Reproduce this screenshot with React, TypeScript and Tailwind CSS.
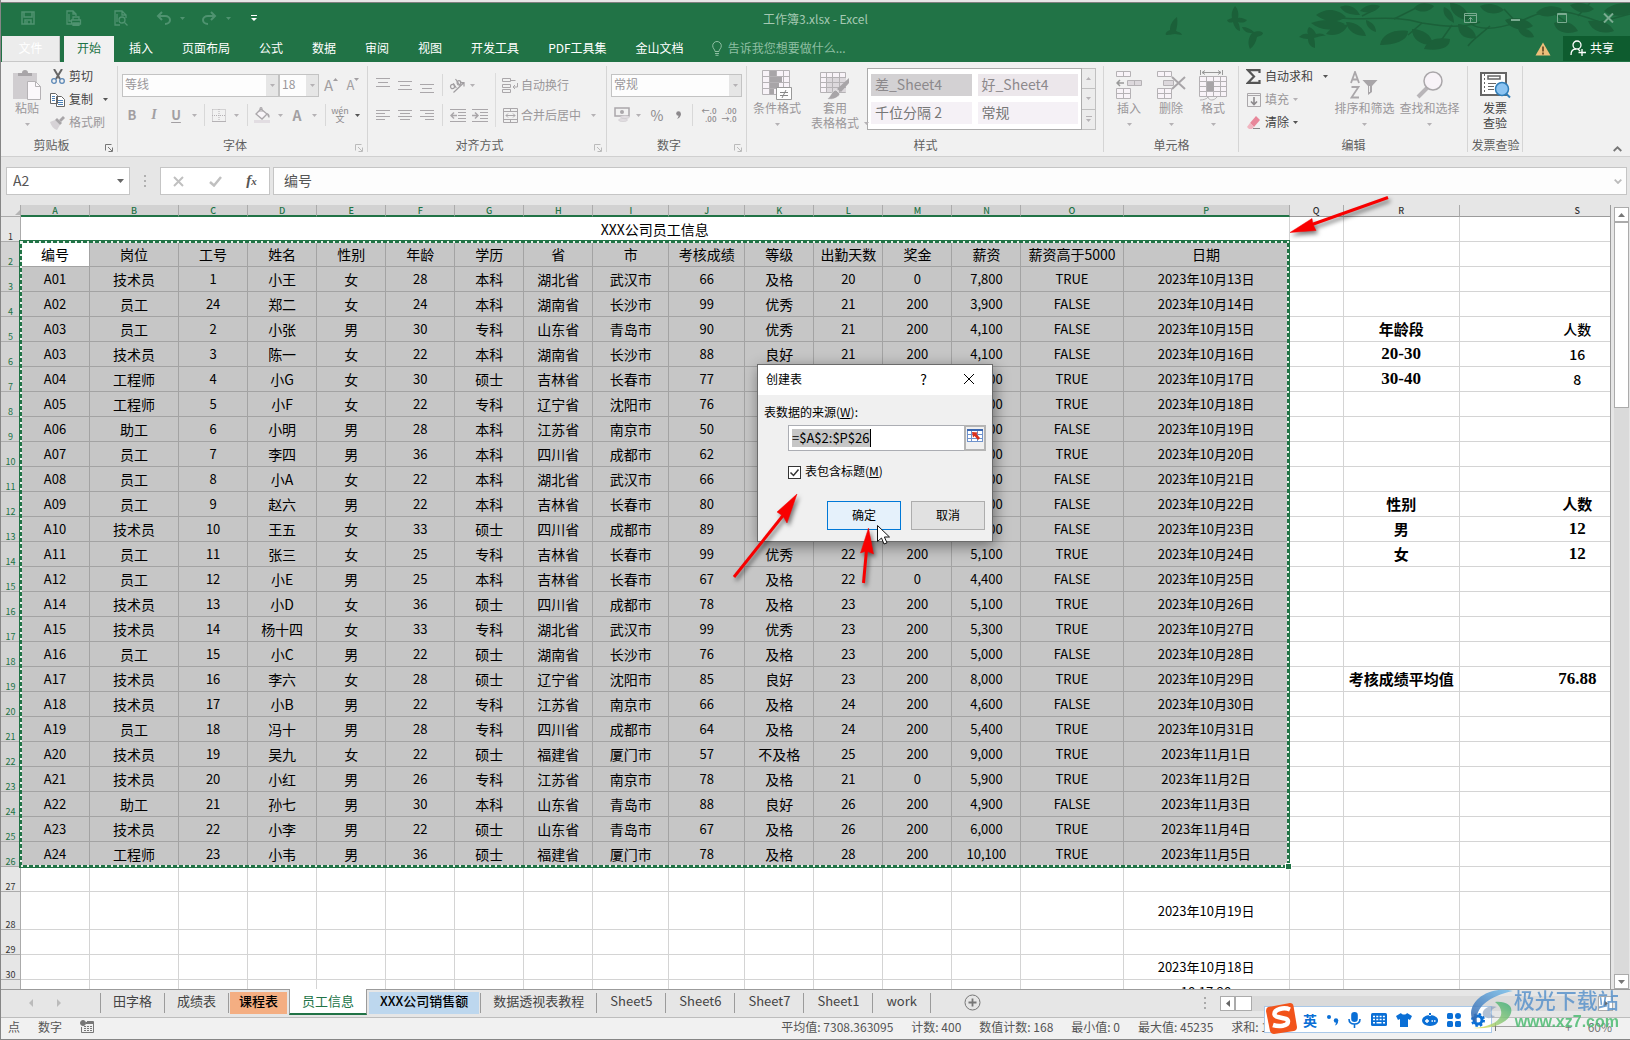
import { useState } from "react";
import type { ReactNode } from "react";
import clsx from "clsx";

// ---- sheet data ----

const COLUMNS = [
  { id: "A", w: "w-[69px]" },
  { id: "B", w: "w-[89px]" },
  { id: "C", w: "w-[69px]" },
  { id: "D", w: "w-[69px]" },
  { id: "E", w: "w-[69px]" },
  { id: "F", w: "w-[69px]" },
  { id: "G", w: "w-[69px]" },
  { id: "H", w: "w-[69px]" },
  { id: "I", w: "w-[76px]" },
  { id: "J", w: "w-[76px]" },
  { id: "K", w: "w-[69px]" },
  { id: "L", w: "w-[69px]" },
  { id: "M", w: "w-[69px]" },
  { id: "N", w: "w-[69px]" },
  { id: "O", w: "w-[102px]" },
  { id: "P", w: "w-[166px]" },
  { id: "Q", w: "w-[54px]" },
  { id: "R", w: "w-[116px]" },
  { id: "S", w: "w-[236px]" },
];

const LAST_SELECTED_COL = 15;

const TABLE_ROWS = [
  "编号|岗位|工号|姓名|性别|年龄|学历|省|市|考核成绩|等级|出勤天数|奖金|薪资|薪资高于5000|日期",
  "A01|技术员|1|小王|女|28|本科|湖北省|武汉市|66|及格|20|0|7,800|TRUE|2023年10月13日",
  "A02|员工|24|郑二|女|24|本科|湖南省|长沙市|99|优秀|21|200|3,900|FALSE|2023年10月14日",
  "A03|员工|2|小张|男|30|专科|山东省|青岛市|90|优秀|21|200|4,100|FALSE|2023年10月15日",
  "A03|技术员|3|陈一|女|22|本科|湖南省|长沙市|88|良好|21|200|4,100|FALSE|2023年10月16日",
  "A04|工程师|4|小G|女|30|硕士|吉林省|长春市|77|及格|22|200|6,100|TRUE|2023年10月17日",
  "A05|工程师|5|小F|女|22|专科|辽宁省|沈阳市|76|及格|22|200|5,600|TRUE|2023年10月18日",
  "A06|助工|6|小明|男|28|本科|江苏省|南京市|50|不及格|22|0|4,500|FALSE|2023年10月19日",
  "A07|员工|7|李四|男|36|本科|四川省|成都市|62|及格|22|200|5,200|TRUE|2023年10月20日",
  "A08|员工|8|小A|女|22|本科|湖北省|武汉市|66|及格|22|200|4,800|FALSE|2023年10月21日",
  "A09|员工|9|赵六|男|22|本科|吉林省|长春市|80|良好|22|200|4,300|FALSE|2023年10月22日",
  "A10|技术员|10|王五|女|33|硕士|四川省|成都市|89|良好|22|200|4,700|FALSE|2023年10月23日",
  "A11|员工|11|张三|女|25|专科|吉林省|长春市|99|优秀|22|200|5,100|TRUE|2023年10月24日",
  "A12|员工|12|小E|男|25|本科|吉林省|长春市|67|及格|22|0|4,400|FALSE|2023年10月25日",
  "A14|技术员|13|小D|女|36|硕士|四川省|成都市|78|及格|23|200|5,100|TRUE|2023年10月26日",
  "A15|技术员|14|杨十四|女|33|专科|湖北省|武汉市|99|优秀|23|200|5,300|TRUE|2023年10月27日",
  "A16|员工|15|小C|男|22|硕士|湖南省|长沙市|76|及格|23|200|5,000|FALSE|2023年10月28日",
  "A17|技术员|16|李六|女|28|硕士|辽宁省|沈阳市|85|良好|23|200|8,000|TRUE|2023年10月29日",
  "A18|技术员|17|小B|男|22|专科|江苏省|南京市|66|及格|24|200|4,600|FALSE|2023年10月30日",
  "A19|员工|18|冯十|男|28|专科|四川省|成都市|64|及格|24|200|5,400|TRUE|2023年10月31日",
  "A20|技术员|19|吴九|女|22|硕士|福建省|厦门市|57|不及格|25|200|9,000|TRUE|2023年11月1日",
  "A21|技术员|20|小红|男|26|专科|江苏省|南京市|78|及格|21|0|5,900|TRUE|2023年11月2日",
  "A22|助工|21|孙七|男|30|本科|山东省|青岛市|88|良好|26|200|4,900|FALSE|2023年11月3日",
  "A23|技术员|22|小李|男|22|硕士|山东省|青岛市|67|及格|26|200|6,000|TRUE|2023年11月4日",
  "A24|工程师|23|小韦|男|36|硕士|福建省|厦门市|78|及格|28|200|10,100|TRUE|2023年11月5日",
].map((r) => r.split("|"));

// Loose cells outside the selected range, keyed by address.
const EXTRA: Record<string, string> = {
  R5: "年龄段", S5: "人数", R6: "20-30", S6: "16", R7: "30-40", S7: "8",
  R12: "性别", S12: "人数", R13: "男", S13: "12", R14: "女", S14: "12",
  R19: "考核成绩平均值", S19: "76.88",
  P28: "2023年10月19日", P30: "2023年10月18日", P31: "18:17:28",
};
const SANS_EXTRA = ["S5", "S6", "S7"];

const ROW_NUMBERS = Array.from({ length: 31 }, (_, i) => i + 1);

function cellValue(row: number, col: number): string {
  if (row >= 2 && row <= 26 && col <= LAST_SELECTED_COL) return TABLE_ROWS[row - 2][col];
  return EXTRA[COLUMNS[col].id + row] ?? "";
}

function cellFont(value: string, row: number, col: number): string {
  if (COLUMNS[col].id === "R" || COLUMNS[col].id === "S") {
    if (SANS_EXTRA.includes(COLUMNS[col].id + row)) return "text-[14px] font-medium";
    if (/^\d/.test(value)) return "text-[17px] font-bold font-['Liberation_Serif',serif]";
    return "text-[15px] font-bold";
  }
  return /^[A-Z0-9]{2}|^\d/.test(value) ? "text-[13px]" : "text-[14px]";
}

// ---- small building blocks ----

function Caret({ dark }: { dark?: boolean }) {
  return (
    <svg width="5" height="3" viewBox="0 0 5 3" className={dark ? "fill-[#555]" : "fill-[#b5b2b5]"}>
      <path d="M0 0h5L2.5 3z" />
    </svg>
  );
}

function Cell({ className, label, children }: { className: string; label?: string; children: ReactNode }) {
  if (!label) return <span className={clsx("flex shrink-0 items-center justify-center", className)}>{children}</span>;
  return (
    <button aria-label={label} className={clsx("flex h-full shrink-0 items-center justify-center", className)}>
      {children}
    </button>
  );
}

function Sep({ className }: { className: string }) {
  return (
    <span className={clsx("flex shrink-0 justify-center", className)}>
      <span className="h-[22px] w-px bg-[#d8d8d8]" />
    </span>
  );
}

function Group({ label, className, launcher, children }: {
  label: string;
  className: string;
  launcher?: "dark" | "light";
  children: ReactNode;
}) {
  return (
    <section className={clsx("relative flex shrink-0 flex-col pt-[3px]", className)}>
      <div className="flex h-[69px]">{children}</div>
      <div className="flex h-[22px] items-center justify-center pr-4 text-[#5f5f5f]">
        <span className={clsx("whitespace-nowrap", !launcher && "-mr-4")}>{label}</span>
      </div>
      {launcher && (
        <svg
          width="8" height="8" viewBox="0 0 8 8" fill="none"
          className={clsx("absolute right-[5px] bottom-1", launcher === "dark" ? "stroke-[#777]" : "stroke-[#bbb]")}
        >
          <path d="M.5 6.5v-6h6M3 3l4 4M7.500 3.500v4h-4" />
        </svg>
      )}
      <span className="absolute top-1 right-0 h-[86px] w-px bg-[#d5d5d5]" />
    </section>
  );
}

function BigButton({ icon, lines, className, dark, inlineCaret }: {
  icon: ReactNode;
  lines: string[];
  className: string;
  dark?: boolean;
  inlineCaret?: boolean;
}) {
  return (
    <button className={clsx("flex shrink-0 flex-col items-center pt-[5px]", dark ? "text-[#444]" : "text-[#9a979a]", className)}>
      <span className="flex h-[30px] items-center">{icon}</span>
      <span className="h-4 leading-4 whitespace-nowrap">{lines[0]}</span>
      <span className="relative flex h-3.5 items-center leading-3.5 whitespace-nowrap">
        {lines[1] ?? <span className="pt-0.5"><Caret /></span>}
        {inlineCaret && <span className="absolute top-1.5 -right-2.5"><Caret /></span>}
      </span>
    </button>
  );
}

function SmallButton({ icon, label, dark, caret }: { icon: ReactNode; label: string; dark?: boolean; caret?: "near" | "far" }) {
  return (
    <button className={clsx("flex h-[23px] items-center whitespace-nowrap", dark ? "text-[#444]" : "text-[#9a979a]")}>
      <span className="mr-1 flex w-[15px] justify-center">{icon}</span>
      <span className="pb-0.5">{label}</span>
      {caret && <span className={caret === "far" ? "ml-2.5" : "ml-1"}><Caret dark={dark} /></span>}
    </button>
  );
}

function Combo({ label, value, className }: { label: string; value: string; className: string }) {
  return (
    <span className={clsx("flex h-[23px] items-center border border-[#c3c3c3] bg-[#fdfdfd]", className)}>
      <select aria-label={label} className="h-full min-w-0 flex-1 appearance-none pb-0.5 pl-[2px] text-[#9a979a] outline-none">
        <option>{value}</option>
      </select>
      <span className="flex h-full w-3 shrink-0 items-center justify-center bg-[#e6e6e6]"><Caret /></span>
    </span>
  );
}

function Lines({ d }: { d: string }) {
  return (
    <svg width="14" height="12" viewBox="0 0 14 12" className="stroke-[#aaa7aa]"><path d={d} /></svg>
  );
}

// ---- title bar ----

function Branches() {
  return (
    <svg className="pointer-events-none absolute top-0 right-0" width="470" height="59" viewBox="0 0 470 59" fill="#1b6039">
      {/* birds */}
      <path d="M17 14c-5 4-7 8-7 13-3 1-5 3-4 5 4 0 8-1 9-1l7 1c-1-3-4-3-6-4 1-4 2-9 1-14z" />
      <path d="M75 3c-3 4-4 8-3 12l-5 2c1 3 4 3 6 2 1 4 3 8 7 9 0-4-1-7-2-9 3 1 7 1 9-2-3-1-6-3-9-2 1-4 0-9-3-12z" />
      <path d="M82 24c2 5 6 6 10 6-3 4-5 9-2 16 4-3 6-7 7-12 3-1 6-2 6-4-4-3-7-1-9-1-3-3-7-5-12-5z" />
      <path d="M149 24c-2 3-2 5-1 7-3-1-6 0-9 3 3 1 6 2 9 2 0 5 3 8 7 9 0-4 0-7-1-10 5-1 8-3 12-2-3-3-7-3-10-2-1-3-4-6-7-7z" />
      {/* twigs */}
      <g fill="none" stroke="#1b6039" strokeWidth="1.500">
        <path d="M180 15c28 3 52-4 82 5 20 3 38 6 58-1" />
        <path d="M202 13l14-7M234 16l22-11M262 20l-14 12M292 22l-12 17M310 20c10 9 34 6 60-6s50-2 70 5l30-8" />
        <path d="M330 23c-10 9-18 14-22 20M356 19l-12-13M392 9l14 10M418 13l12-13" />
      </g>
      {/* leaves */}
      <path d="M156 12c8-6 20-8 30 2-8 6-20 6-30-2zM180 4c8-4 16 0 20 8-10 0-16-2-20-8zM151 20c12-4 24-4 34 1-12 8-24 7-34-1zM186 19c10 0 18 6 20 14-10 0-18-4-20-14zM166 31c6-8 14-10 22-9-4 8-12 12-22 9zM200 8c4-5 12-8 20-5-4 6-12 8-20 5zM206 17c6 2 10 6 10 12-6-2-10-6-10-12z" />
      <path d="M248 28c0 10-14 14-28 14 2-12 16-16 28-14zM252 26c12 0 22 8 20 16-12 0-20-6-20-16zM254 5c4-6 14-6 20-2-4 6-14 8-20 2z" />
      <path d="M290 36c0 10-12 12-26 10 4-10 14-12 26-10zM298 21c8 0 18 6 18 14-12 2-18-4-18-14zM290 0c10 0 18 6 20 18-12-2-20-8-20-18zM284 4c6 2 10 8 10 16-8-4-12-10-10-16zM320 3c8-4 18-2 24 4-8 6-20 4-24-4z" />
      <path d="M345 17c10-4 22-2 28 6-10 6-22 4-28-6zM358 26c8-2 14 2 16 8-8 2-14-2-16-8zM376 10c8-8 18-8 26-4-6 8-16 10-26 4zM394 20c10-4 20 0 24 8-10 4-22 2-24-8zM410 2c8-4 18-2 24 4-8 6-18 4-24-4zM428 18c12-2 22 2 26 10-12 4-22 0-26-10zM444 8c8-8 18-8 26-8v10c-8 4-18 4-26-2z" />
    </svg>
  );
}

function TitleBar() {
  const tabs = ["插入", "页面布局", "公式", "数据", "审阅", "视图", "开发工具", "PDF工具集", "金山文档"];
  return (
    <header className="relative shrink-0 bg-[#217346]">
      <Branches />
      <div className="relative grid h-[33px] grid-cols-[1fr_auto_1fr] items-center text-[#4f9370]">
        <div className="flex items-center pb-[3px] pl-5">
          <button aria-label="保存" className="mr-[31px]">
            <svg width="14" height="14" viewBox="0 0 14 14" fill="none" stroke="currentColor" strokeWidth="1.500"><path d="M1 1h12v12H1zM3 1v5h8V1M4 13V9h6v4M6 10v3" /></svg>
          </button>
          <button aria-label="快速打印" className="mr-8">
            <svg width="16" height="16" viewBox="0 0 16 16" fill="none" stroke="currentColor" strokeWidth="1.300"><path d="M5 14H1V1h6l3 3v2M7 1v3h3M3 4v7h2M7 10V7h6v3M5.500 10h9v4h-9zM7 13h6v2.500H7z" /></svg>
          </button>
          <button aria-label="打印预览" className="mr-7">
            <svg width="14" height="16" viewBox="0 0 14 16" fill="none" stroke="currentColor" strokeWidth="1.300"><path d="M6 15H1V1h7l4 4v3M8 1v4h4M3 4v8M10.500 12.500l3 3" /><circle cx="8" cy="10" r="3" /></svg>
          </button>
          <button aria-label="撤消" className="mr-[9px]">
            <svg width="15" height="14" viewBox="0 0 15 14" fill="none" stroke="currentColor" strokeWidth="2"><path d="M6 1L2 5l4 4M2 5h7c3 0 5 2 5 4s-2 4-5 4" /></svg>
          </button>
          <svg width="5" height="3" className="mr-[17px] fill-current"><path d="M0 0h5L2.500 3z" /></svg>
          <button aria-label="恢复" className="mr-[9px]">
            <svg width="15" height="14" viewBox="0 0 15 14" fill="none" stroke="currentColor" strokeWidth="2"><path d="M9 1l4 4-4 4M13 5H6C3 5 1 7 1 9s2 4 5 4" /></svg>
          </button>
          <svg width="5" height="3" className="mr-[20px] fill-current"><path d="M0 0h5L2.500 3z" /></svg>
          <button aria-label="自定义快速访问工具栏">
            <svg width="6" height="6" viewBox="0 0 6 6" className="fill-white"><path d="M0 0h6v1H0zM0 3h6L3 6z" /></svg>
          </button>
        </div>
        <h1 className="pb-0.5 text-[#a5c9b3]">工作簿3.xlsx - Excel</h1>
        <div className="flex items-center justify-end pr-4 pb-[3px] text-[#7aab90]">
          <button aria-label="功能区显示选项" className="mr-[34px]">
            <svg width="13" height="10" viewBox="0 0 13 10" fill="none" stroke="currentColor"><path d="M.5.500h12v9H.5zM.5 2.500h12M6.500 9V4.500M4.500 6.500l2-2 2 2" /></svg>
          </button>
          <button aria-label="最小化" className="mr-[37px]">
            <svg width="9" height="10" viewBox="0 0 9 10" fill="currentColor"><path d="M0 6h9v2H0z" /></svg>
          </button>
          <button aria-label="最大化" className="mr-9">
            <svg width="10" height="10" viewBox="0 0 10 10" fill="none" stroke="currentColor"><path d="M.5.500h9v9h-9zM0 1.500h10" /></svg>
          </button>
          <button aria-label="关闭">
            <svg width="11" height="10" viewBox="0 0 11 10" fill="none" stroke="currentColor" strokeWidth="2"><path d="M1 .5l9 9M10 .5l-9 9" /></svg>
          </button>
        </div>
      </div>
      <nav className="relative flex h-[26px] items-stretch text-white">
        <button className="mr-1 ml-px w-[58px] border-r border-b border-[#c8c8c8] bg-[#ececec] pb-0.5 text-white">文件</button>
        <button className="bg-[#f1f1f1] px-[13px] pb-[3px] text-[#217346]">开始</button>
        <div className="ml-px flex gap-px">
          {tabs.map((t) => (
            <button key={t} className="px-3.5 pb-[3px] whitespace-nowrap">{t}</button>
          ))}
        </div>
        <label className="ml-3.5 flex items-center pb-px text-[#8fbfa3]">
          <svg width="10" height="15" viewBox="0 0 10 15" fill="none" stroke="currentColor" className="mr-1.5"><path d="M3 10.500C3 8.500.7 7.500.7 4.800a4.300 4.300 0 0 1 8.600 0C9.300 7.500 7 8.500 7 10.500zM3 12.500h4M3.500 14.300h3" /></svg>
          <input aria-label="告诉我" placeholder="告诉我您想要做什么..." className="w-36 pb-px outline-none placeholder:text-[#8fbfa3]" />
        </label>
        <div className="ml-auto flex items-center">
          <svg width="16" height="14" viewBox="0 0 16 14" className="mr-3"><path d="M8 .5L15.500 13.500H.5z" fill="#eebf7a" /><path d="M8 4.500v5M8 10.500v2" stroke="#5a4420" strokeWidth="1.600" /></svg>
          <button className="flex h-[25px] w-[67px] items-center gap-1 self-start bg-[#0e5c2f] pb-0.5 pl-[7px]">
            <svg width="16" height="16" viewBox="0 0 16 16" fill="none" stroke="currentColor" strokeWidth="1.300"><circle cx="7" cy="5" r="4" /><path d="M1 15c0-4 2-6 5-6M8 9l2 2M12 9v7M8.500 12.500H16" /></svg>
            共享
          </button>
        </div>
      </nav>
    </header>
  );
}

// ---- ribbon ----

function Ribbon() {
  return (
    <div className="relative flex h-[95px] shrink-0 overflow-hidden border-b border-[#d0d0d0] bg-[#f1f1f1]">
      <Group label="剪贴板" className="w-[117px]" launcher="dark">
        <BigButton
          className="ml-2.5 w-8"
          lines={["粘贴"]}
          icon={
            <svg width="28" height="30" viewBox="0 0 28 30"><path d="M0 3h24v26H0z" fill="#d0cdd0" /><path d="M5 6V3h4a3 3 0 0 1 6 0h4v3z" fill="#a8a5a8" /><path d="M14.500 11.500h8l5 5v13h-13z" fill="#fbf8fb" stroke="#b5b2b5" /><path d="M22.500 11.500v5h5" fill="none" stroke="#b5b2b5" /></svg>
          }
        />
        <div className="ml-[7px] flex flex-col">
          <SmallButton
            dark label="剪切"
            icon={<svg width="14" height="15" viewBox="0 0 14 15" fill="none"><path d="M3 0l6 10M11 0L5 10" stroke="#666" strokeWidth="2" /><circle cx="3" cy="12" r="2.300" stroke="#5b87b5" strokeWidth="1.300" /><circle cx="11" cy="12" r="2.300" stroke="#5b87b5" strokeWidth="1.300" /></svg>}
          />
          <SmallButton
            dark label="复制" caret="far"
            icon={<svg width="15" height="14" viewBox="0 0 15 14" fill="#fff" stroke="#666"><path d="M.5.500h5l2 2v8h-7zM6.500 3.500h5l3 3v7h-8z" /><path d="M2 3.500h3M2 5.500h3M2 7.500h3M8 7.500h5M8 9.500h5M8 11.500h5" stroke="#4a7fb5" /></svg>}
          />
          <SmallButton
            label="格式刷"
            icon={<svg width="15" height="14" viewBox="0 0 15 14"><path d="M0 6l5-2 5 5-3 5c-3-1-6-4-7-8z" fill="#d6d2d6" /><path d="M5 4l2-2 5 5-2 2z" fill="#a8a5a8" /><path d="M9 4l4-4 2 2-4 4z" fill="#a8a5a8" /></svg>}
          />
        </div>
      </Group>

      <Group label="字体" className="w-[250px]" launcher="light">
        <div className="flex flex-col pt-[5px] pl-[3px] text-[#a29fa2]">
          <div className="flex h-[30px] items-center pl-px">
            <Combo label="字体" value="等线" className="w-[157px]" />
            <Combo label="字号" value="18" className="w-10" />
            <Cell label="增大字号" className="w-6 text-[15px]">A<svg width="5" height="3" className="mb-3 fill-current"><path d="M2.500 0L5 3H0z" /></svg></Cell>
            <Cell label="减小字号" className="w-5 text-[13px]">A<svg width="5" height="3" className="mb-3 fill-current"><path d="M0 0h5L2.500 3z" /></svg></Cell>
          </div>
          <div className="flex h-[30px] items-center">
            <Cell label="加粗" className="w-[22px] text-[13px] font-bold">B</Cell>
            <Cell label="倾斜" className="w-[22px] font-['Liberation_Serif',serif] text-[14px] font-bold italic">I</Cell>
            <Cell label="下划线" className="w-[22px] text-[13px] font-bold underline underline-offset-2">U</Cell>
            <Cell className="w-3.5"><Caret /></Cell>
            <Sep className="w-[7px]" />
            <Cell label="边框" className="w-[21px]">
              <svg width="14" height="13" viewBox="0 0 14 13" fill="none" stroke="#b5b2b5"><path d="M.5.500h13v12M.5.500v12M7 0v12M0 6.500h14" strokeDasharray="1 1" /><path d="M0 12.500h14" strokeWidth="1" /></svg>
            </Cell>
            <Cell className="w-3.5"><Caret /></Cell>
            <Sep className="w-2" />
            <Cell label="填充颜色" className="w-[22px]">
              <svg width="16" height="16" viewBox="0 0 16 16"><path d="M7 2l6 5-5 5-6-5z" fill="#f8f5f8" stroke="#aaa7aa" strokeWidth="1.300" /><path d="M6 5V.7h2V5" fill="none" stroke="#aaa7aa" /><path d="M13 6c3 1 3 4 2 5-1-1-2-3-2-5z" fill="#aaa7aa" /><path d="M0 13h16v3H0z" fill="#e2dde2" /></svg>
            </Cell>
            <Cell className="w-3.5"><Caret /></Cell>
            <Cell label="字体颜色" className="w-5 text-[14px] font-bold">A</Cell>
            <Cell className="w-3.5"><Caret /></Cell>
            <Sep className="w-2" />
            <Cell label="拼音" className="w-[22px]">
              <span className="flex flex-col items-center text-[9px] leading-[8px] text-[#8c898c]"><span>wén</span><span>文</span></span>
            </Cell>
            <Cell className="w-3"><Caret dark /></Cell>
          </div>
        </div>
      </Group>

      <Group label="对齐方式" className="w-[239px]" launcher="light">
        <div className="flex flex-col pt-[5px] pl-1">
          <div className="flex h-[30px] items-center">
            <Cell label="顶端对齐" className="w-[22px] pb-2"><Lines d="M0 3.500h14M2 7.500h10M0 11.500h14" /></Cell>
            <Cell label="垂直居中" className="w-[22px]"><Lines d="M0 2.500h14M2 6.500h10M0 10.500h14" /></Cell>
            <Cell label="底端对齐" className="w-[22px] pt-2"><Lines d="M0 1.500h14M2 5.500h10M0 9.500h14" /></Cell>
            <Sep className="w-2" />
            <Cell label="方向" className="w-[21px]">
              <svg width="16" height="15" viewBox="0 0 16 15" fill="none" stroke="#a09da0" strokeWidth="1.200"><path d="M4.500 14.500L14.500 5M15 8.500V4.700h-4" /><ellipse cx="3.500" cy="8.500" rx="2" ry="2.200" /><path d="M4.300 5.300l3 4.700M6.500 1l4.500 6.500" /><ellipse cx="10" cy="4.800" rx="1.900" ry="2.200" /></svg>
            </Cell>
            <Cell className="w-[11px]"><Caret /></Cell>
          </div>
          <div className="flex h-[30px] items-center">
            <Cell label="左对齐" className="w-[22px]"><Lines d="M0 1.500h14M0 4.500h9M0 7.500h14M0 10.500h9" /></Cell>
            <Cell label="居中" className="w-[22px]"><Lines d="M0 1.500h14M2 4.500h10M0 7.500h14M2 10.500h10" /></Cell>
            <Cell label="右对齐" className="w-[22px]"><Lines d="M0 1.500h14M5 4.500h9M0 7.500h14M5 10.500h9" /></Cell>
            <Sep className="w-2" />
            <Cell label="减少缩进量" className="w-[23px]">
              <svg width="16" height="13" viewBox="0 0 16 13" fill="none" stroke="#aaa7aa"><path d="M0 .5h16M8 3.500h8M8 6.500h8M8 9.500h8M0 12.500h16" /><path d="M1 6.500h6M4 3.500l-3 3 3 3" strokeWidth="1.500" /></svg>
            </Cell>
            <Cell label="增加缩进量" className="w-[22px]">
              <svg width="16" height="13" viewBox="0 0 16 13" fill="none" stroke="#aaa7aa"><path d="M0 .5h16M8 3.500h8M8 6.500h8M8 9.500h8M0 12.500h16" /><path d="M0 6.500h6M3 3.500l3 3-3 3" strokeWidth="1.500" /></svg>
            </Cell>
          </div>
        </div>
        <span className="ml-auto w-[8px]"><span className="mx-auto mt-2 block h-[54px] w-px bg-[#dcdcdc]" /></span>
        <div className="flex w-[108px] flex-col pt-[5px] text-[#9a979a]">
          <button className="flex h-[30px] items-center whitespace-nowrap">
            <span className="flex w-[22px] justify-center">
              <svg width="16" height="15" viewBox="0 0 16 15" fill="none" stroke="#aaa7aa"><path d="M.5.500h8v3h-8zM.5 6.500h8v3h-8zM.5 11.500h8v3h-8zM9 2.500h4.500M15.500 5v4H11M13 7l-2 2 2 2" /></svg>
            </span>
            <span className="pb-px">自动换行</span>
          </button>
          <button className="flex h-[30px] items-center whitespace-nowrap">
            <span className="flex w-[22px] justify-center">
              <svg width="15" height="15" viewBox="0 0 15 15" fill="none" stroke="#aaa7aa"><path d="M.5.500h14v14H.5zM.5 3.500h14M.5 11.500h14M7.500 0v3M7.500 12v3M3 7.500h9M5 5.500l-2 2 2 2M10 5.500l2 2-2 2" /></svg>
            </span>
            合并后居中<span className="ml-2.5"><Caret /></span>
          </button>
        </div>
      </Group>

      <Group label="数字" className="w-[140px]" launcher="light">
        <div className="flex flex-col pt-[5px] pl-1 text-[#8c898c]">
          <div className="flex h-[30px] items-center"><Combo label="数字格式" value="常规" className="w-[131px]" /></div>
          <div className="flex h-[30px] items-center">
            <Cell label="会计数字格式" className="w-[22px]">
              <svg width="16" height="16" viewBox="0 0 16 16" fill="none"><path d="M1 1h14v8H1z" stroke="#aaa7aa" strokeWidth="1.500" /><circle cx="8" cy="5" r="2" fill="#aaa7aa" /><ellipse cx="11" cy="10" rx="4.500" ry="1.500" fill="#e2dee2" stroke="#c4c0c4" strokeWidth=".5" /><ellipse cx="9" cy="13" rx="4.500" ry="1.500" fill="#e2dee2" stroke="#c4c0c4" strokeWidth=".5" /></svg>
            </Cell>
            <Cell className="w-2.5"><Caret /></Cell>
            <Cell label="百分比样式" className="w-7 text-[14px]">%</Cell>
            <Cell label="千位分隔样式" className="w-3.5"><svg width="5" height="8" viewBox="0 0 5 8" fill="#8c898c"><circle cx="2.500" cy="2.500" r="2.300" /><path d="M5 2.500c0 3-2 5-4 5.500 1-1.500 2-3 1.500-4z" /></svg></Cell>
            <Sep className="w-[15px]" />
            <Cell label="增加小数位数" className="w-[18px]"><span className="text-right text-[8px] leading-[8px] font-medium">←.0<br />.00</span></Cell>
            <Cell label="减少小数位数" className="w-[22px]"><span className="text-right text-[8px] leading-[8px] font-medium">.00<br />→.0</span></Cell>
          </div>
        </div>
      </Group>

      <Group label="样式" className="w-[357px]">
        <BigButton
          className="ml-1 w-[52px]"
          lines={["条件格式"]}
          icon={
            <svg width="30" height="30" viewBox="0 0 30 30" fill="none"><path d="M.5.500h27v24H.5z" fill="#f8f3f8" stroke="#b5b2b5" /><path d="M0 6.500h28M0 12.500h28M0 18.500h28M7.500 0v24M14.500 0v24M21.500 0v24" stroke="#b5b2b5" /><path d="M8 1h6v5H8zM8 7h12v5H8zM8 13h9v5H8zM8 19h4v5H8z" fill="#a8a5a8" /><path d="M14.500 17.500h15v12h-15z" fill="#fff" stroke="#999" /><path d="M18 22.500h8M18 25.500h8M24 20l-4 8" stroke="#888" /></svg>
          }
        />
        <BigButton
          className="ml-px w-[62px]"
          lines={["套用", "表格格式"]}
          inlineCaret
          icon={
            <svg width="30" height="30" viewBox="0 0 30 30" fill="none"><path d="M.5 2.500h25v20H.5z" fill="#f8f3f8" stroke="#b5b2b5" /><path d="M7 8h19v14H7z" fill="#dcd8dc" /><path d="M0 7.500h26M0 12.500h26M0 17.500h26M6.500 2v20M12.500 2v20M19.500 2v20" stroke="#b5b2b5" /><path d="M29 8v5l-8 9-4-3z" fill="#a8a5a8" /><path d="M16 20l4 4c-2 4-7 6-13 5 4-2 4-8 9-9z" fill="#a8a5a8" stroke="#fff" strokeWidth=".5" /></svg>
          }
        />
        <div className="mt-[3px] ml-px flex h-[62px] text-[14px] text-[#8c898c]">
          <div className="grid w-[215px] grid-cols-2 gap-1.5 border border-[#ababab] bg-white px-[3px] py-[5px]">
            <button className="bg-[#d3d1d3] pb-0.5 pl-1 text-left">差_Sheet4</button>
            <button className="bg-[#ece7eb] pb-0.5 pl-1 text-left">好_Sheet4</button>
            <button className="bg-[#f5f1f6] pb-0.5 pl-1 text-left text-[#777]">千位分隔 2</button>
            <button className="bg-[#f5f1f6] pb-0.5 pl-1 text-left text-[#777]">常规</button>
          </div>
          <div className="flex w-[14px] flex-col divide-y divide-[#c0c0c0] border border-l-0 border-[#c0c0c0] bg-[#ececec]">
            <button aria-label="上一行" className="flex flex-1 items-center justify-center"><span className="rotate-180"><Caret /></span></button>
            <button aria-label="下一行" className="flex flex-1 items-center justify-center"><Caret /></button>
            <button aria-label="其他样式" className="flex flex-1 flex-col items-center justify-center gap-0.5"><span className="h-px w-1.5 bg-[#b5b2b5]" /><Caret /></button>
          </div>
        </div>
      </Group>

      <Group label="单元格" className="w-[135px]">
        <BigButton
          className="ml-1 w-[42px]" lines={["插入"]}
          icon={<svg width="26" height="28" viewBox="0 0 26 28" fill="#f8f3f8" stroke="#b5b2b5"><path d="M.5.500h14v5H.5zM7.500.500v5M.5 17.500h14v10H.5zM.5 22.500h14M7.500 17.500v10" /><path d="M11.500 9.500h14v5h-14zM18.500 9.500v5" fill="#dcd8dc" /><path d="M1 12h7M4 9l-3 3 3 3" fill="none" stroke="#999" strokeWidth="1.500" /></svg>}
        />
        <BigButton
          className="w-[42px]" lines={["删除"]}
          icon={<svg width="29" height="28" viewBox="0 0 29 28" fill="#f8f3f8" stroke="#b5b2b5"><path d="M.5.500h14v5H.5zM7.500.500v5M.5 17.500h14v10H.5zM.5 22.500h14M7.500 17.500v10" /><path d="M6.500 9.500h10v5h-10z" fill="#dcd8dc" /><path d="M15 6l13 12M28 6L15 18" fill="none" stroke="#a8a5a8" strokeWidth="2" /></svg>}
        />
        <BigButton
          className="w-[42px]" lines={["格式"]}
          icon={<svg width="28" height="31" viewBox="0 0 28 31" fill="none" stroke="#b5b2b5"><path d="M1.500 0v5M23.500 0v5M3 2.500h19M6 .5l-3 2 3 2M19 .5l3 2-3 2" stroke="#999" /><path d="M.5 6.500h27v20H.5z" fill="#f8f3f8" /><path d="M0 11.500h28M0 16.500h28M0 21.500h28M7.500 6v20M14.500 6v20M21.500 6v20" /><path d="M8 12h7v9H8z" fill="#a8a5a8" stroke="none" /><path d="M1 30c3 0 7-1 8-3 1 4 6 4 9 0" /></svg>}
        />
      </Group>

      <Group label="编辑" className="w-[229px]">
        <div className="flex w-[93px] flex-col pl-[7px]">
          <SmallButton dark label="自动求和" caret="far" icon={<svg width="15" height="15" viewBox="0 0 15 15" fill="none" stroke="#555" strokeWidth="2.200"><path d="M13.500 4V1.200H2l6 6.300-6 6.300h11.500V11" /></svg>} />
          <SmallButton label="填充" caret="near" icon={<svg width="14" height="14" viewBox="0 0 14 14" fill="none" stroke="#aaa7aa"><path d="M.5.500h13v13H.5zM.5 2.500h13" /><path d="M7 4v7M4 8.500l3 3 3-3" strokeWidth="1.600" stroke="#8c898c" /></svg>} />
          <SmallButton dark label="清除" caret="near" icon={<svg width="14" height="14" viewBox="0 0 14 14"><path d="M9 0l4 4-6 7-4-4z" fill="#e8879a" /><path d="M3 7l4 4-2 2H2L0 11z" fill="#f1b5c0" /><path d="M6 12.500h7" stroke="#888" /></svg>} />
        </div>
        <BigButton
          className="w-[65px]" lines={["排序和筛选"]}
          icon={<svg width="29" height="28" viewBox="0 0 29 28" fill="none" stroke="#aaa7aa"><path d="M1 12L5 1l4 11M2.500 8.500h5M1.500 16h7L1.500 26.500H9" strokeWidth="1.800" /><path d="M12.500 9h15l-5.500 6v6l-4 3v-9z" fill="#a8a5a8" stroke="none" /><path d="M19.500 15v6" stroke="#eee" /></svg>}
        />
        <BigButton
          className="w-[65px]" lines={["查找和选择"]}
          icon={<svg width="28" height="28" viewBox="0 0 28 28" fill="none" stroke="#aaa7aa"><path d="M2 26l9-9" strokeWidth="4" stroke="#b8b5b8" /><circle cx="17" cy="10" r="9" fill="#f8f3f8" strokeWidth="1.500" /></svg>}
        />
      </Group>

      <Group label="发票查验" className="w-[55px]">
        <BigButton
          dark className="w-[54px]" lines={["发票", "查验"]}
          icon={<svg width="32" height="28" viewBox="0 0 32 28" fill="none"><path d="M2 2h25v22H2z" fill="#fff" stroke="#666" strokeWidth="2" /><path d="M5.500 3v20" stroke="#666" strokeDasharray="2 2" /><path d="M9 5h12v3H9z" stroke="#666" strokeWidth="1.500" /><path d="M9 12.500h8M9 15.500h6M9 18.500h6" stroke="#666" /><circle cx="23" cy="18" r="6.500" fill="#8cc4f2" stroke="#2f7db8" strokeWidth="1.500" /><path d="M27 22.500l4 4" stroke="#2f7db8" strokeWidth="2" /></svg>}
        />
      </Group>
      <button aria-label="折叠功能区" className="mt-auto mr-2 mb-1 ml-auto">
        <svg width="9" height="6" viewBox="0 0 9 6" fill="none" stroke="#777" strokeWidth="1.800"><path d="M.7 5l3.800-3.700L8.300 5" /></svg>
      </button>
    </div>
  );
}

function FormulaBar() {
  return (
    <div className="flex h-12 shrink-0 items-start bg-[#e6e6e6] py-2.5 pr-[3px] pl-[5px] text-[14px] text-[#555]">
      <div className="flex h-7 w-[124px] items-center border border-[#c5c5c5] bg-white pr-[5px]">
        <input aria-label="名称框" defaultValue="A2" className="min-w-0 flex-1 pb-[3px] pl-1.5 outline-none" />
        <svg width="7" height="4" className="fill-[#666]"><path d="M0 0h7L3.500 4z" /></svg>
      </div>
      <span className="flex h-7 w-[30px] flex-col items-center justify-center gap-[3px]">
        <i className="size-0.5 bg-[#b0b0b0]" /><i className="size-0.5 bg-[#b0b0b0]" /><i className="size-0.5 bg-[#b0b0b0]" />
      </span>
      <div className="flex h-7 w-[110px] items-center justify-around border border-[#c5c5c5] bg-white">
        <button aria-label="取消输入"><svg width="11" height="11" viewBox="0 0 11 11" stroke="#c0c0c0" strokeWidth="2"><path d="M1 1l9 9M10 1l-9 9" /></svg></button>
        <button aria-label="输入"><svg width="13" height="11" viewBox="0 0 13 11" fill="none" stroke="#c0c0c0" strokeWidth="2.500"><path d="M1 6l4 3.500L12 1" /></svg></button>
        <button aria-label="插入函数" className="pb-0.5 font-['Liberation_Serif',serif] text-[15px] font-bold italic">f<span className="text-[11px]">x</span></button>
      </div>
      <div className="ml-[3px] flex h-7 flex-1 items-center border border-[#c5c5c5] bg-[#fdfdfd] pr-1">
        <input aria-label="编辑栏" defaultValue="编号" className="min-w-0 flex-1 pb-[3px] pl-[10px] outline-none" />
        <svg width="8" height="5" viewBox="0 0 8 5" fill="none" stroke="#bbb" strokeWidth="1.800"><path d="M.7.700L4 4 7.300.7" /></svg>
      </div>
    </div>
  );
}

// ---- grid ----

function SheetGrid() {
  return (
    <div className="relative min-w-0 flex-1 overflow-hidden border-r border-[#9b9b9b] bg-white">
      <table className="w-[1695px] table-fixed border-separate border-spacing-0 text-center text-black">
        <colgroup>
          <col className="w-5" />
          {COLUMNS.map((c) => <col key={c.id} className={c.w} />)}
        </colgroup>
        <thead>
          <tr className="h-3 text-[9px] leading-[9px]">
            <th className="h-3 border-r border-b border-[#ababab] bg-[#e6e6e6] p-0">
              <svg width="5" height="5" className="mt-1 ml-auto fill-[#b5b5b5]"><path d="M5 0v5H0z" /></svg>
            </th>
            {COLUMNS.map((c, i) => (
              <th
                key={c.id}
                className={clsx(
                  "h-3 overflow-hidden border-r border-r-[#ababab] p-0 font-medium",
                  i <= LAST_SELECTED_COL
                    ? "border-b-2 border-b-[#217346] bg-[#d2d2d2] text-[#217346]"
                    : "border-b border-b-[#9b9b9b] bg-[#e6e6e6] text-[#333]",
                )}
              >
                {c.id}
              </th>
            ))}
          </tr>
        </thead>
        <tbody>
          {ROW_NUMBERS.map((row) => {
            const inRange = row >= 2 && row <= 26;
            const height = row === 28 ? "h-[38px]" : "h-[25px]";
            return (
              <tr key={row} className={height}>
                <th
                  className={clsx(
                    "border-r border-b border-[#ababab] p-0 align-bottom text-[9px] leading-[9px] font-normal",
                    height,
                    inRange ? "bg-[#d2d2d2] text-[#217346]" : "bg-[#e6e6e6] text-[#333]",
                  )}
                >
                  {row}
                </th>
                {COLUMNS.map((c, i) => {
                  if (row === 1 && i === 0) {
                    return (
                      <td key={c.id} colSpan={16} className="border-r border-b border-[#d4d4d4] p-0 text-[14px] leading-5">
                        XXX公司员工信息
                      </td>
                    );
                  }
                  if (row === 1 && i <= LAST_SELECTED_COL) return null;
                  const value = cellValue(row, i);
                  const selected = inRange && i <= LAST_SELECTED_COL;
                  return (
                    <td
                      key={c.id}
                      className={clsx(
                        "border-r border-b p-0 leading-5 whitespace-nowrap",
                        selected ? "border-[#a3a3a3]" : "border-[#d4d4d4]",
                        selected && !(row === 2 && i === 0) && "bg-[#c6c6c6]",
                        cellFont(value, row, i),
                      )}
                    >
                      {value}
                    </td>
                  );
                })}
              </tr>
            );
          })}
        </tbody>
      </table>
      {/* marching ants round A2:P26 */}
      <svg className="pointer-events-none absolute top-[35px] left-[18px]" width="1275" height="631" fill="none">
        <path d="M1.500 1.500h1268v625h-1268z" stroke="#217346" strokeWidth="3" />
        <path d="M2 2h1267v624H2z" stroke="#e9f3ec" strokeWidth="2" strokeDasharray="2 4" />
        <path d="M1266 623h7v7h-7z" fill="#fff" />
        <path d="M1267 624h5v5h-5z" fill="#217346" />
      </svg>
    </div>
  );
}

function VerticalScroll() {
  return (
    <div className="flex w-[19px] shrink-0 flex-col bg-[#e6e6e6] pt-0.5 pr-px pl-[3px]">
      <button aria-label="向上滚动" className="flex h-[15px] items-center justify-center border border-[#ababab] bg-white">
        <svg width="7" height="4" className="fill-[#777]"><path d="M3.500 0L7 4H0z" /></svg>
      </button>
      <div className="flex-1 bg-[#dadada]"><div className="h-[186px] border border-[#ababab] bg-white" /></div>
      <button aria-label="向下滚动" className="flex h-[15px] items-center justify-center border border-[#ababab] bg-white">
        <svg width="7" height="4" className="fill-[#777]"><path d="M0 0h7L3.500 4z" /></svg>
      </button>
    </div>
  );
}

// ---- sheet tabs and status ----

function SheetTabs() {
  const plain = "mt-[3px] h-5 border-r border-[#9b9b9b] pb-1 leading-4";
  return (
    <div className="flex h-[29px] shrink-0 items-start border-t border-b border-t-[#9b9b9b] border-b-[#bdbdbd] bg-[#e6e6e6] text-[13px] whitespace-nowrap text-[#444]">
      <div className="flex h-[26px] w-[99px] items-center pl-7">
        <button aria-label="上一张表"><svg width="4" height="8" className="fill-[#bbb]"><path d="M4 0v8L0 4z" /></svg></button>
        <button aria-label="下一张表" className="ml-6"><svg width="4" height="8" className="fill-[#bbb]"><path d="M0 0v8l4-4z" /></svg></button>
      </div>
      <div className="flex items-start">
        <button className={clsx(plain, "border-l px-3")}>田字格</button>
        <button className={clsx(plain, "px-3")}>成绩表</button>
        <button className="mt-0.5 ml-px h-[22px] bg-[#f4ae82] px-[9px] pb-1 leading-[18px] font-medium text-black">课程表</button>
        <button className="-mt-px ml-0.5 h-[26px] border-r border-b-2 border-l border-x-[#9b9b9b] border-b-[#217346] bg-white px-3 pb-px text-[#217346]">员工信息</button>
        <button className="mt-0.5 ml-0.5 h-[22px] bg-[#bdd7ee] px-[11px] pb-1 leading-[18px] font-medium text-black">XXX公司销售额</button>
        <button className={clsx(plain, "ml-px border-l px-3")}>数据透视表教程</button>
        {["Sheet5", "Sheet6", "Sheet7", "Sheet1", "work"].map((s) => (
          <button key={s} className={clsx(plain, "px-[13px]")}>{s}</button>
        ))}
      </div>
      <button aria-label="新工作表" className="mt-1 ml-[33px]">
        <svg width="17" height="17" viewBox="0 0 17 17" fill="none" stroke="#777"><circle cx="8.500" cy="8.500" r="7.500" /><path d="M8.500 4.500v8M4.500 8.500h8" strokeWidth="1.800" /></svg>
      </button>
      <div className="ml-auto flex h-[26px] items-center pr-[17px]">
        <span className="mr-3.5 flex flex-col gap-[3px]">
          <i className="size-0.5 bg-[#aaa]" /><i className="size-0.5 bg-[#aaa]" /><i className="size-0.5 bg-[#aaa]" />
        </span>
        <button aria-label="向左滚动" className="flex size-[15px] items-center justify-center border border-[#ababab] bg-white">
          <svg width="4" height="7" className="fill-[#666]"><path d="M4 0v7L0 3.500z" /></svg>
        </button>
        <div className="h-[15px] w-[363px] bg-[#dadada]"><div className="h-full w-[17px] border border-[#ababab] bg-white" /></div>
        <button aria-label="向右滚动" className="flex size-[15px] items-center justify-center border border-[#ababab] bg-white">
          <svg width="4" height="7" className="fill-[#666]"><path d="M0 0v7l4-3.500z" /></svg>
        </button>
      </div>
    </div>
  );
}

function StatusBar() {
  const stats = ["平均值: 7308.363095", "计数: 400", "数值计数: 168", "最小值: 0", "最大值: 45235", "求和: 1227805"];
  return (
    <footer className="flex h-[21px] shrink-0 items-center bg-[#f1f1f1] pb-1 pl-[7px] whitespace-nowrap text-[#555]">
      <span>点</span>
      <span className="ml-[18px]">数字</span>
      <svg width="14" height="13" viewBox="0 0 14 13" className="ml-[18px]" fill="none" stroke="#777"><circle cx="3" cy="3" r="2.500" fill="#777" /><path d="M7 1.500h6.500v11h-12V7" /><path d="M6 2h8v2H6z" fill="#777" stroke="none" /><path d="M4 6.500h8M4 8.500h8M4 10.500h8" strokeDasharray="2 1" /></svg>
      <div className="ml-auto flex gap-[18px]">
        {stats.map((s) => <span key={s}>{s}</span>)}
      </div>
      <div className="flex w-[322px] items-center justify-end pr-[18px] pl-4 text-[#777]">
        <input type="range" aria-label="显示比例" min={10} max={400} defaultValue={60} className="h-px w-20 appearance-none bg-[#a0a0a0] [&::-webkit-slider-thumb]:h-2 [&::-webkit-slider-thumb]:w-px [&::-webkit-slider-thumb]:appearance-none [&::-webkit-slider-thumb]:bg-[#777]" />
        <span className="mr-4">+</span>
        <span>60%</span>
      </div>
    </footer>
  );
}

// ---- floating layers ----

function CreateTableDialog() {
  const [hasHeader, setHasHeader] = useState(true);
  return (
    <div role="dialog" aria-label="创建表" className="absolute top-[364px] left-[756px] w-[236px] border border-[#6b6b6b] bg-[#f0f0f0] text-black shadow-[2px_4px_14px_rgba(0,0,0,0.45)]">
      <div className="flex h-[30px] items-center bg-white pb-0.5 pl-2">
        <span className="flex-1">创建表</span>
        <button aria-label="帮助" className="mr-9 text-[14px]">?</button>
        <button aria-label="关闭" className="mr-[17px]">
          <svg width="12" height="12" viewBox="0 0 12 12" stroke="#000"><path d="M1 1l10 10M11 1L1 11" /></svg>
        </button>
      </div>
      <div className="px-1.5 pt-2 pb-2.5">
        <label htmlFor="source" className="block leading-[18px]">表数据的来源(<u>W</u>):</label>
        <div className="mt-1 ml-6 flex h-[26px]">
          <div className="flex flex-1 items-start border border-r-0 border-[#abadb3] bg-white pt-[3px] pl-[3px]">
            <input id="source" defaultValue="=$A$2:$P$26" className="h-[18px] w-[79px] border-r border-black bg-[#c6c6c6] pb-0.5 text-[13px] outline-none" />
          </div>
          <button aria-label="折叠对话框" className="flex w-[22px] justify-center border-2 border-[#b4b4b4] bg-[#f0f0f0] pt-0.5">
            <svg width="16" height="13" viewBox="0 0 16 13"><path d="M0 0h16v13H0z" fill="#fff" /><path d="M0 0h16v2H0z" fill="#3b66b0" /><path d="M0 5.500h16M0 9.500h16M4.500 2v11M10.500 2v11M0 12.500h16M.5 2v11M15.500 2v11" stroke="#6f92cc" /><path d="M5 3l6 .5-1.500 1.500L13 9l-2 2-3.500-4L6 8.500z" fill="#d9301c" /></svg>
          </button>
        </div>
        <label className="relative mt-3 ml-6 flex h-[18px] items-center">
          <input
            type="checkbox"
            checked={hasHeader}
            onChange={(e) => setHasHeader(e.target.checked)}
            className="mr-1 size-[13px] appearance-none border border-[#333] bg-white"
          />
          {hasHeader && (
            <svg width="13" height="13" viewBox="0 0 13 13" fill="none" stroke="#333" strokeWidth="1.500" className="pointer-events-none absolute left-0"><path d="M2.500 6.500l3 3 5-6" /></svg>
          )}
          <span className="pb-0.5">表包含标题(<u>M</u>)</span>
        </label>
        <div className="mt-5 flex justify-end gap-2.5 pr-px pb-px">
          <button className="h-[29px] w-[74px] border border-[#0078d7] bg-[#e5f1fb] pb-0.5">确定</button>
          <button className="h-[29px] w-[74px] border border-[#adadad] bg-[#e1e1e1] pb-0.5">取消</button>
        </div>
      </div>
    </div>
  );
}

function Annotations() {
  return (
    <svg className="pointer-events-none absolute inset-0 size-full" >
      <g fill="#f80000" stroke="#f80000" className="drop-shadow-[2px_3px_2px_rgba(0,0,0,0.5)]">
        <path d="M1387 197.500L1311 224.500" strokeWidth="3" />
        <path d="M1289 232.500l22-14 1 6 3 6z" strokeWidth=".5" />
        <path d="M733 577l51-64" strokeWidth="3" />
        <path d="M796 494l-20 18 6 4 4 7z" strokeWidth=".5" />
        <path d="M862.500 583l3-33" strokeWidth="3" />
        <path d="M867.500 528l-8 25 6-2 7 3z" strokeWidth=".5" />
      </g>
      <path d="M876.500 525.500v16l4-3.500 2.500 6 3-1.200-2.600-5.800h5.100z" fill="#fff" stroke="#111" />
    </svg>
  );
}

function ImeBar() {
  return (
    <div className="absolute right-[138px] bottom-1.5 flex h-[27px] w-[228px] items-center border border-[#a9c8e8] bg-white text-[#0a6fd6]">
      <svg width="32" height="32" viewBox="0 0 32 32" className="mb-1 shrink-0">
        <path d="M3 5L25 1q3 0 3.500 3L32 25q0 3-3 4L9 32q-3 0-4-3L1 9q0-3 2-4z" fill="#f2541b" />
        <path d="M25 7.500C19 5 9 7 9.500 12.500 10 17 23 14.500 23 19.500c0 4.500-9 5.500-15 3.500" fill="none" stroke="#fff" strokeWidth="4.500" />
      </svg>
      <div className="flex flex-1 items-center justify-between pr-1.5 pl-1.5">
        <b className="text-[14px]">英</b>
        <svg width="12" height="12" viewBox="0 0 12 12" fill="currentColor"><circle cx="2" cy="3" r="2" /><circle cx="9" cy="6.500" r="2.200" /><path d="M11.200 6.500c0 3-1.500 4.500-3.200 5 .5-1 1-2 1-3z" /></svg>
        <svg width="13" height="16" viewBox="0 0 13 16" fill="none" stroke="currentColor" strokeWidth="1.600"><rect x="4" y="0.800" width="5" height="8.500" rx="2.500" fill="currentColor" /><path d="M1 7c0 3 2 5 5.500 5S12 10 12 7M6.500 12v4" /></svg>
        <svg width="16" height="13" viewBox="0 0 16 13"><rect width="16" height="13" rx="1.500" fill="currentColor" /><path d="M2 3.500h12M2 6.500h12" stroke="#fff" strokeWidth="1.600" strokeDasharray="2 1.300" /><path d="M2 9.800h2M5.500 9.800h5M12 9.800h2" stroke="#fff" strokeWidth="1.600" /></svg>
        <svg width="16" height="14" viewBox="0 0 16 14" fill="currentColor"><path d="M5 0c1 2 5 2 6 0l5 3-2 4-2-1v8H4V6L2 7 0 3z" /></svg>
        <svg width="16" height="14" viewBox="0 0 16 14" fill="currentColor"><path d="M8 2a8 5.500 0 1 0 .1 0zM7 0h2v3H7z" /><path d="M3 8h4M5 6v4M9.500 8h1.500M12 8h1.500" stroke="#fff" strokeWidth="1.400" /></svg>
        <svg width="14" height="14" viewBox="0 0 14 14" fill="currentColor"><rect width="6" height="6" rx="1.500" /><rect y="8" width="6" height="6" rx="1.500" /><rect x="8" y="8" width="6" height="6" rx="1.500" /><circle cx="11" cy="3" r="3" /></svg>
        <svg width="14" height="14" viewBox="0 0 14 14" fill="none" stroke="currentColor"><circle cx="7" cy="7" r="4" strokeWidth="3" /><circle cx="7" cy="7" r="6" strokeWidth="2" strokeDasharray="2.500 2.200" /></svg>
      </div>
    </div>
  );
}

function Watermark() {
  return (
    <div className="pointer-events-none absolute right-[11px] bottom-2 flex opacity-85">
      <svg width="42" height="42" viewBox="0 0 42 42">
        <defs>
          <linearGradient id="swirlTop" x1="0" y1="1" x2="1" y2="0"><stop offset="0" stopColor="#2f62ad" /><stop offset="1" stopColor="#7cc4ee" /></linearGradient>
          <linearGradient id="swirlLow" x1="0" y1="1" x2="1" y2="0"><stop offset="0" stopColor="#f2e24a" /><stop offset=".4" stopColor="#9fd07a" /><stop offset="1" stopColor="#3fae7c" /></linearGradient>
        </defs>
        <path d="M42 2C22-3 1 8 0 24c0 6 3 9 6 9-2-12 8-25 36-31z" fill="url(#swirlTop)" />
        <path d="M24 13c12-1 18 4 16 11-2 9-18 17-38 15 16-1 26-6 28-13 1-5-1-9-6-13z" fill="url(#swirlLow)" />
        <path d="M26 18c-8-3-16 3-14 8 1 4 9 4 12 1-5 0-7-6 2-9z" fill="#7d95b8" opacity=".7" />
      </svg>
      <div className="ml-px flex flex-col">
        <span className="h-6 text-[21px] leading-5 font-medium text-[#5b93cb]">极光下载站</span>
        <span className="pl-px font-['Liberation_Sans',sans-serif] text-[16px] leading-[18px] font-bold text-[#4dbb72]">www.xz7.com</span>
      </div>
    </div>
  );
}

export default function App() {
  return (
    <div className="relative flex h-screen flex-col overflow-hidden border-b border-l border-[#868686] bg-[#e6e6e6] font-['Noto_Sans_CJK_SC',sans-serif] text-[12px] leading-4">
      <div className="h-[3px] shrink-0 border-b border-[#7f7f7f]" />
      <TitleBar />
      <Ribbon />
      <FormulaBar />
      <main className="flex min-h-0 flex-1">
        <SheetGrid />
        <VerticalScroll />
      </main>
      <SheetTabs />
      <StatusBar />
      <CreateTableDialog />
      <Annotations />
      <ImeBar />
      <Watermark />
    </div>
  );
}
